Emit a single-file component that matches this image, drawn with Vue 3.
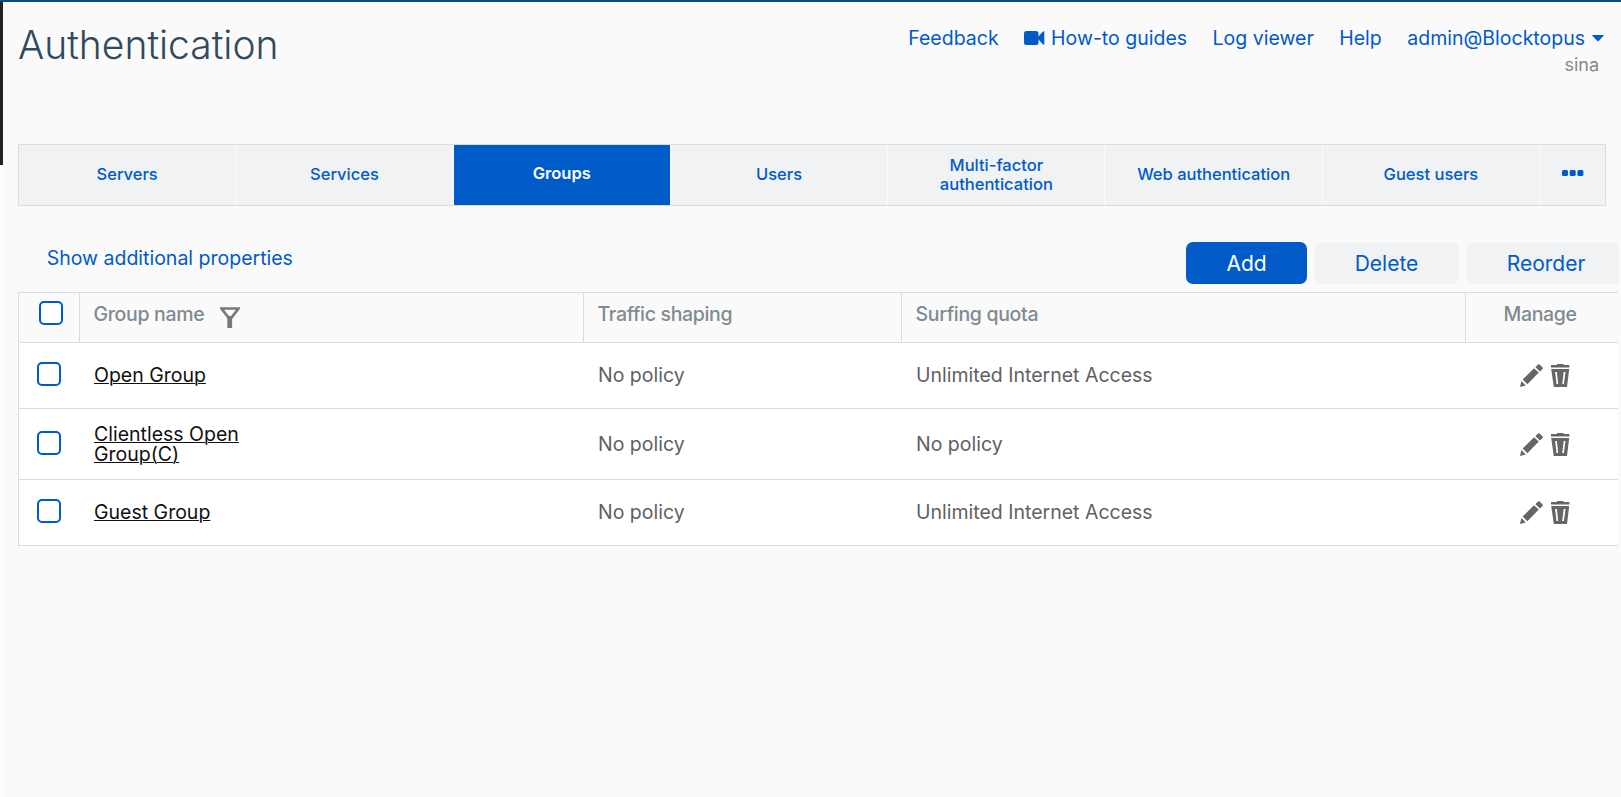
<script setup>
const links = ['Feedback', 'How-to guides', 'Log viewer', 'Help']
const tabs = ['Servers', 'Services', 'Groups', 'Users', 'Multi-factor authentication', 'Web authentication', 'Guest users']
const rows = [
  { name: 'Open Group', traffic: 'No policy', quota: 'Unlimited Internet Access' },
  { name: 'Clientless Open Group(C)', traffic: 'No policy', quota: 'No policy', tall: true },
  { name: 'Guest Group', traffic: 'No policy', quota: 'Unlimited Internet Access' },
]
</script>

<template>
  <div class="page">
    <div class="rail"><div class="rail-dark"></div></div>
    <main class="main">
      <header class="header">
        <h1 class="title">Authentication</h1>
        <div class="account">
          <nav class="links">
            <a v-for="l in links" :key="l" class="link">
              <svg v-if="l === 'How-to guides'" class="video" viewBox="0 0 21 14" width="21" height="14">
                <rect x="0" y="0" width="14.5" height="14" rx="2.5" />
                <path d="M14 6 L18.5 1 Q20.3 -.3 20.3 1 V13 Q20.3 14.3 18.5 13 L14 8 Z" />
              </svg>
              <span>{{ l }}</span>
            </a>
            <a class="link">
              <span>admin@Blocktopus</span>
              <svg class="caret" viewBox="0 0 12 7" width="12" height="7"><path d="M.6 0 H11.4 Q12 .2 11.6 .8 L6.6 6 Q6 6.6 5.4 6 L.4 .8 Q0 .2 .6 0Z" /></svg>
            </a>
          </nav>
          <div class="tenant">sina</div>
        </div>
      </header>

      <nav class="tabs">
        <a v-for="t in tabs" :key="t" class="tab" :class="{ active: t === 'Groups', wrap: t.startsWith('Multi') }"><span>{{ t }}</span></a>
        <a class="more">
          <svg viewBox="0 0 22 6" width="22" height="6"><rect x="0" y="0" width="6" height="6" rx="1.5" /><rect x="7.7" y="0" width="6" height="6" rx="1.5" /><rect x="15.4" y="0" width="6" height="6" rx="1.5" /></svg>
        </a>
      </nav>

      <div class="toolbar">
        <a class="props">Show additional properties</a>
        <div class="buttons">
          <button class="btn primary">Add</button>
          <button class="btn delete">Delete</button>
          <button class="btn reorder">Reorder</button>
        </div>
      </div>

      <section class="table">
        <div class="row head">
          <div class="cell check"><span class="box"></span></div>
          <div class="cell"><span>Group name</span>
            <svg class="funnel" viewBox="0 0 20 21" width="20" height="21"><path d="M1.5 1.5 H18.5 L11.7 10.4 H8.3 Z" /><path class="stem" d="M7.3 10 H12.1 V21 H7.3Z" /></svg>
          </div>
          <div class="cell">Traffic shaping</div>
          <div class="cell">Surfing quota</div>
          <div class="cell manage">Manage</div>
        </div>
        <div v-for="r in rows" :key="r.name" class="row body" :class="{ tall: r.tall }">
          <div class="cell check"><span class="box"></span></div>
          <div class="cell text"><a class="name">{{ r.name }}</a></div>
          <div class="cell text">{{ r.traffic }}</div>
          <div class="cell text">{{ r.quota }}</div>
          <div class="cell actions">
            <svg viewBox="0 0 23 23" width="23" height="23">
              <path d="M0 23 L1.4 17 L5.8 21.6 Z M2.6 15.6 L14 4.2 L18.8 8.6 L7.4 20.2 Z M15.4 3.2 L18 .6 Q18.8 0 19.6 .6 L22.6 3.6 Q23.2 4.4 22.6 5 L20 7.6 Z" />
            </svg>
            <svg viewBox="0 0 19 23" width="19" height="23">
              <path fill-rule="evenodd" d="M0 1.1 H6 V0 H12.6 V1.1 H18.4 V3.6 H0 Z M.2 5 H18.2 L16 23 H2.8 Z M4.1 8.1 L5.5 20 H7.2 L5.9 8.1 Z M12.7 8.1 L11.2 20 H12.9 L14.5 8.1 Z" />
            </svg>
          </div>
        </div>
      </section>
    </main>
  </div>
</template>

<style>
body { margin: 0; background: #fafafa; overflow: hidden; }
</style>

<style scoped>
* { box-sizing: border-box; }
.page { width: 1621px; height: 797px; display: flex; border-top: 2px solid #0b4a7c; background: #fafafa; font-family: Inter, sans-serif; color: #5f6163; overflow: hidden; }
.rail { width: 3px; background: #fdfdfd; flex: none; }
.rail-dark { height: 163px; background: #212226; }
.main { width: 1615px; flex: none; padding-left: 15px; }
.header { height: 142px; display: flex; justify-content: space-between; padding-right: 14px; }
.title { margin: 19px 0 0; font-size: 39px; line-height: 48px; font-weight: 300; color: #2f4a5c; height: 48px; }
.account { padding-top: 23px; }
.links { display: flex; gap: 25.5px; }
.link { display: flex; align-items: center; font-size: 19.5px; line-height: 26px; color: #005bc8; white-space: nowrap; }
.link svg { fill: #005bc8; flex: none; }
.video { margin-right: 6px; }
.caret { margin-left: 7px; }
.tenant { text-align: right; padding: 1px 5px 0 0; font-size: 18px; line-height: 26px; color: #84898e; }
.tabs { width: 1588px; height: 62px; display: flex; border: 1px solid #dbdcde; background: #f0f2f4; }
.tab { width: 217.3px; flex: none; display: flex; align-items: center; justify-content: center; text-align: center; border-right: 1px solid #fafafa; font-size: 16.5px; line-height: 19px; font-weight: 500; color: #005bc8; padding: 0 20px 2px; }
.tab.wrap { padding: 0 40px; }
.tab.active { background: #005bc8; color: #fff; font-weight: 600; padding-bottom: 4px; }
.more { flex: 1; display: flex; align-items: center; justify-content: center; padding-bottom: 4px; }
.more svg { fill: #005bc8; }
.toolbar { height: 86px; display: flex; justify-content: space-between; padding-top: 36px; }
.props { margin: 3px 0 0 28.7px; font-size: 19.5px; line-height: 26px; color: #005bc8; }
.buttons { display: flex; gap: 7px; }
.btn { height: 42px; border: 0; padding: 2px 0 0; border-radius: 7px; font: 400 21px/40px Inter, sans-serif; background: #f0f2f4; color: #005bc8; }
.btn.primary { width: 121px; background: #005bc8; color: #fff; }
.btn.delete { width: 145px; }
.btn.reorder { width: 152px; border-radius: 7px 0 0 7px; padding-left: 8px; }
.table { border-left: 1px solid #d9dce0; border-top: 1px solid #d9dce0; }
.row { display: grid; grid-template-columns: 61px 504px 318px 564px 1fr; border-bottom: 1px solid #d9dce0; }
.cell { display: flex; align-items: center; padding-left: 14px; }
.head { height: 50px; font-size: 19.5px; font-weight: 500; color: #818a91; letter-spacing: -0.33px; }
.head .cell { border-right: 1px solid #d9dce0; padding-bottom: 8px; padding-left: 13.5px; }
.head .cell:last-child { border-right: 0; }
.head .check { padding: 0 0 9px 20px; }
.funnel { margin: 8px 0 0 16px; fill: none; stroke: #77797b; stroke-width: 2.6; }
.stem { fill: #77797b; stroke: none; }
.head .manage { padding-left: 37.5px; }
.body { height: 66px; background: #fff; font-size: 19.5px; line-height: 20px; }
.body.tall { height: 71px; }
.body:not(.tall) .text { padding-bottom: 2px; }
.check { padding: 0 0 3px 18.3px; }
.box { width: 24px; height: 24px; border: 2px solid #005bc8; border-radius: 5px; background: #fff; }
.name { width: 160px; color: #111; text-decoration: underline; text-underline-offset: 1px; text-decoration-thickness: 1px; }
.actions { gap: 8px; padding-left: 53.7px; }
.actions svg { fill: #666; flex: none; }
</style>
